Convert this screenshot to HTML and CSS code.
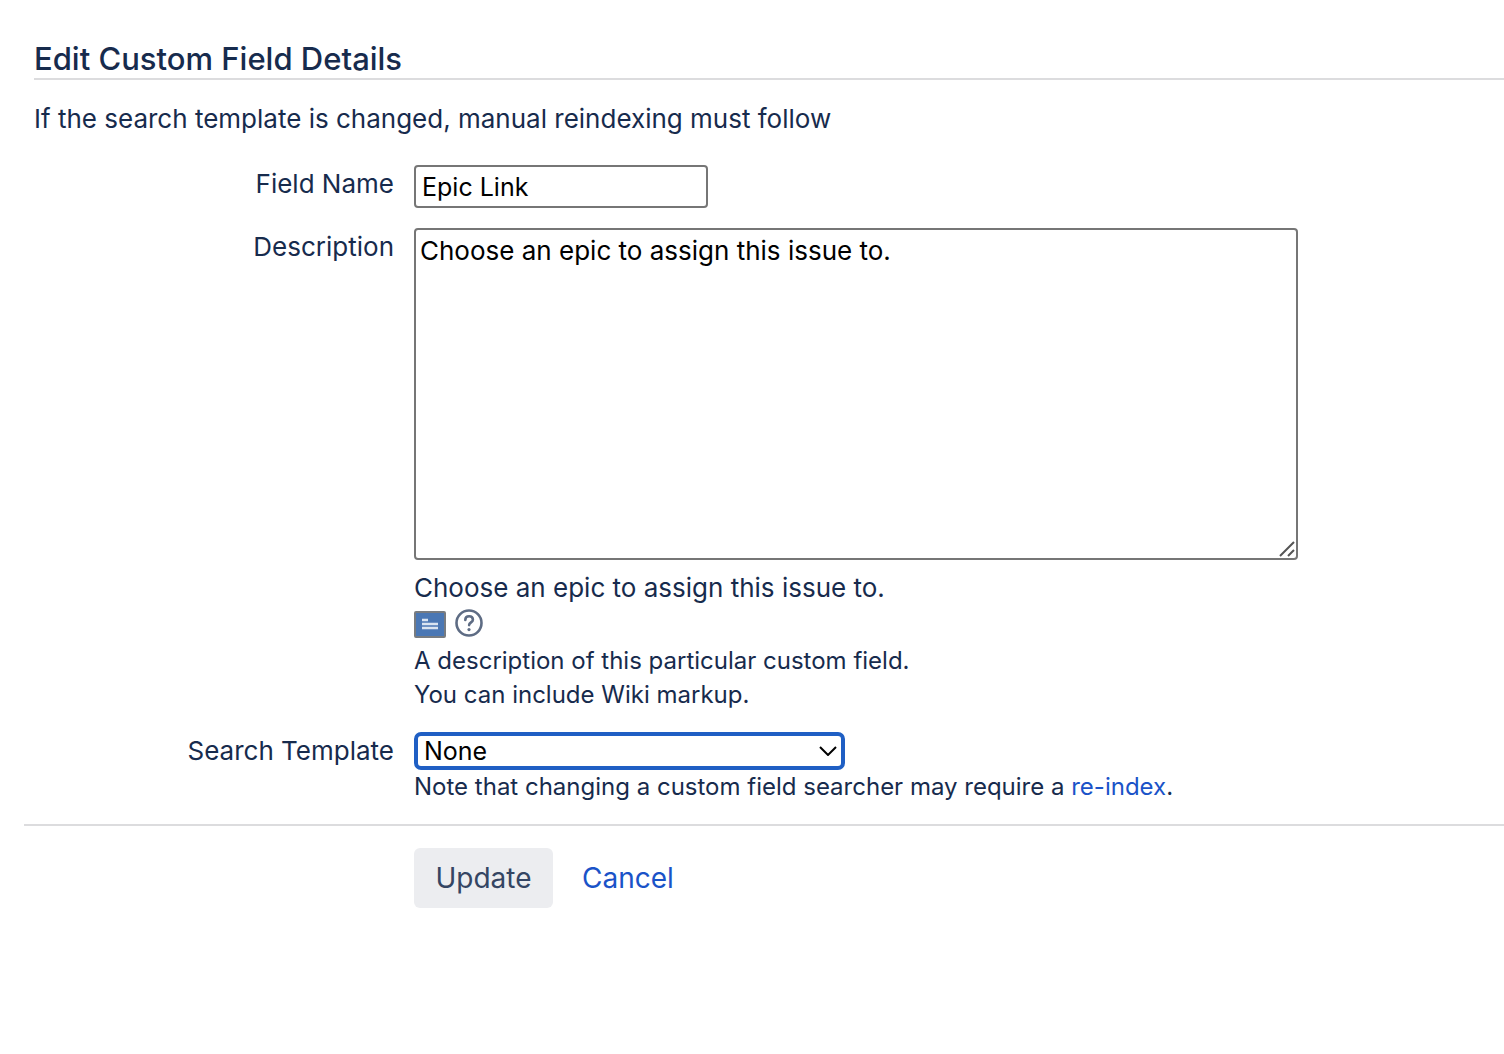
FILE: index.html
```html
<!DOCTYPE html>
<html lang="en">
<head>
<meta charset="utf-8">
<title>Edit Custom Field Details</title>
<link rel="stylesheet" href="styles.css">
</head>
<body>
<main class="page">
  <header class="intro">
    <h1 class="title">Edit Custom Field Details</h1>
    <p class="lead">If the search template is changed, manual reindexing must follow</p>
  </header>
  <form class="form">
    <div class="fields">
      <label class="label" for="name">Field Name</label>
      <div class="cell"><input class="control text-input" id="name" type="text" value="Epic Link"></div>

      <label class="label" for="description">Description</label>
      <div class="cell">
        <div class="editor">
          <textarea class="control textarea" id="description">Choose an epic to assign this issue to.</textarea>
          <svg class="grip" viewBox="0 0 16 16" aria-hidden="true"><path d="M1 15 15 1M9 15l6-6"/></svg>
        </div>
        <p class="preview">Choose an epic to assign this issue to.</p>
        <div class="tools">
          <button class="tool" type="button" aria-label="Preview">
            <svg width="32" height="30" viewBox="0 0 32 30"><rect x="1" y="3" width="30" height="25" rx="1" fill="#4a77b4" stroke="#777b80" stroke-width="2"/><path d="M8 11h6M8 15h16M8 19h16" stroke="#d9e4f1" stroke-width="2.4"/></svg>
          </button>
          <a class="tool" href="#help" aria-label="Help">
            <svg width="28" height="28" viewBox="0 0 28 28" fill="none" stroke="#5e6c84" stroke-width="2.6"><circle cx="14" cy="14" r="12.5"/><path stroke-linecap="round" d="M10.3 10.9c0-2.2 1.6-3.6 3.8-3.6s3.8 1.4 3.8 3.4c0 2.6-3.8 2.7-3.8 5.4"/><circle cx="14" cy="20.6" r="1.6" fill="#5e6c84" stroke="none"/></svg>
          </a>
        </div>
        <p class="hint">A description of this particular custom field.<br>You can include Wiki markup.</p>
      </div>

      <label class="label" for="searcher">Search Template</label>
      <div class="cell">
        <div class="select-wrap">
          <select class="control select" id="searcher"><option>None</option></select>
          <svg class="chevron" viewBox="0 0 18 10" aria-hidden="true"><path d="m1 1 8 8 8-8"/></svg>
        </div>
        <p class="hint">Note that changing a custom field searcher may require a <a class="link" href="#reindex">re-index</a>.</p>
      </div>
    </div>
    <div class="actions">
      <button class="update" type="submit">Update</button>
      <a class="link cancel" href="#cancel">Cancel</a>
    </div>
  </form>
</main>
</body>
</html>
```
FILE: styles.css
```css
* { box-sizing: border-box; }

body {
  margin: 0;
  background: #fff;
  color: #172b4d;
  font: 26px/36px Inter, "Liberation Sans", sans-serif;
}

h1, p { margin: 0; }

.page { padding: 40px 0 40px 24px; }
.intro { padding-left: 10px; }

.title {
  border-bottom: 2px solid #dcdcde;
  font-size: 31px;
  font-weight: 500;
  line-height: 38px;
}

.lead { padding: 21px 0 28px; }

.fields {
  display: grid;
  grid-template-columns: 370px 1fr;
  column-gap: 20px;
  row-gap: 20px;
}

.label { text-align: right; line-height: 38px; }
.cell { min-width: 0; }

.control {
  display: block;
  border: 2px solid #767676;
  border-radius: 4px;
  background: #fff;
  color: #000;
  font: 26px/32px Inter, "Liberation Sans", sans-serif;
}

.text-input { width: 294px; height: 43px; padding: 0 6px; font-size: 25px; }

.editor { position: relative; width: 884px; max-width: 100%; }
.textarea { width: 100%; height: 332px; padding: 5px 4px; resize: none; }

.grip {
  position: absolute;
  right: 3px;
  bottom: 3px;
  width: 16px;
  height: 16px;
  fill: none;
  stroke: #555;
  stroke-width: 2;
}

.preview { margin-top: 10px; }
.tools { display: flex; align-items: flex-start; gap: 9px; height: 38px; padding-top: 3px; }

.tool {
  display: flex;
  padding: 0;
  border: 0;
  background: none;
}

.hint { font-size: 24px; line-height: 34px; }

.select-wrap { position: relative; width: 431px; }

.select {
  width: 100%;
  height: 38px;
  padding: 0 6px;
  border: 4px solid #1f5fc4;
  border-radius: 7px;
  appearance: none;
  font-size: 25px;
  line-height: 30px;
}

.chevron {
  position: absolute;
  top: 14px;
  right: 8px;
  width: 18px;
  height: 10px;
  fill: none;
  stroke: #000;
  stroke-width: 2;
}

.link { color: #1a53c8; text-decoration: none; }

.actions {
  display: flex;
  align-items: center;
  gap: 29px;
  margin-top: 20px;
  padding: 22px 0 0 390px;
  border-top: 2px solid #dcdcde;
  font-size: 28px;
}

.update {
  width: 139px;
  height: 60px;
  padding: 0;
  border: 0;
  border-radius: 6px;
  background: #ecedf0;
  color: #344563;
  font: 28px/36px Inter, sans-serif;
}
```
